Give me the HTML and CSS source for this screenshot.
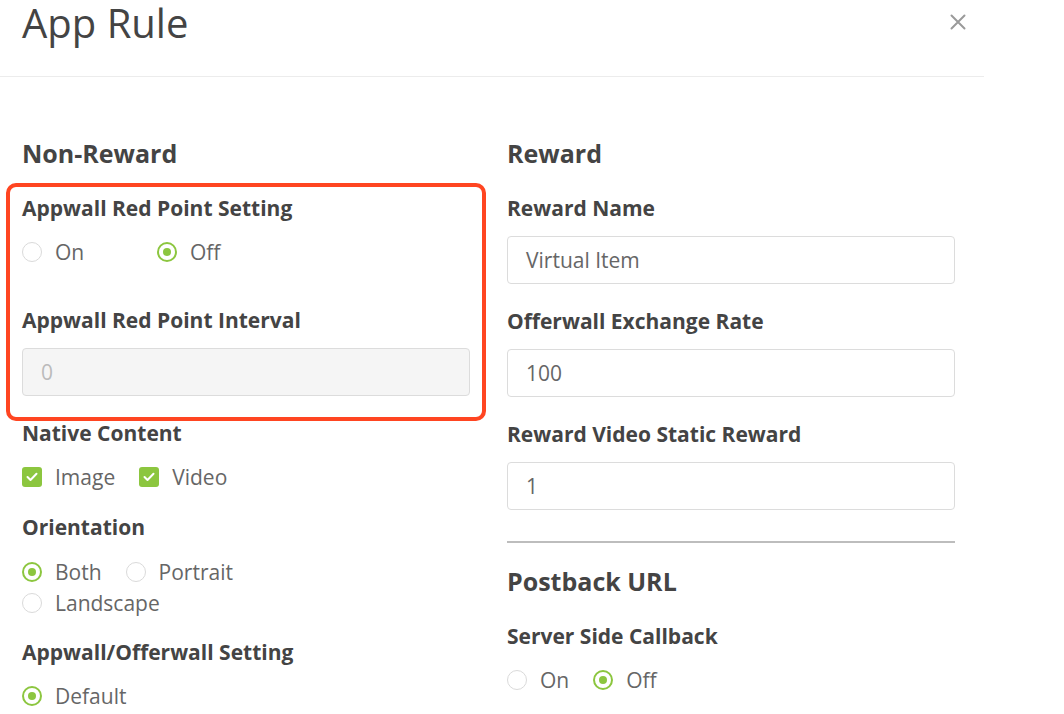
FILE: index.html
```html
<!DOCTYPE html>
<html lang="en">
<head>
<meta charset="utf-8">
<title>App Rule</title>
<link rel="stylesheet" href="styles.css">
</head>
<body>
<div class="modal">
  <header class="modal-header">
    <h1 class="modal-title">App Rule</h1>
    <button class="close" aria-label="Close">
      <svg width="16" height="16" viewBox="0 0 16 16"><path d="M1.5 1.5 L14.5 14.5 M14.5 1.5 L1.5 14.5" stroke="#9a9a9a" stroke-width="2" fill="none" stroke-linecap="round"/></svg>
    </button>
  </header>
  <div class="modal-body">
    <section class="col">
      <h2 class="section-title">Non-Reward</h2>
      <div class="highlight">
        <div class="group group-wide">
          <div class="label">Appwall Red Point Setting</div>
          <div class="options">
            <label class="opt opt-wide"><span class="radio"></span>On</label>
            <label class="opt"><span class="radio checked"></span>Off</label>
          </div>
        </div>
        <div class="group">
          <div class="label">Appwall Red Point Interval</div>
          <div class="input disabled">0</div>
        </div>
      </div>
      <div class="group group-check">
        <div class="label">Native Content</div>
        <div class="options">
          <label class="opt"><span class="check"><svg width="12" height="10" viewBox="0 0 12 10"><path d="M1.5 5 L4.5 8 L10.5 1.8" stroke="#fff" stroke-width="2" fill="none" stroke-linecap="round" stroke-linejoin="round"/></svg></span>Image</label>
          <label class="opt"><span class="check"><svg width="12" height="10" viewBox="0 0 12 10"><path d="M1.5 5 L4.5 8 L10.5 1.8" stroke="#fff" stroke-width="2" fill="none" stroke-linecap="round" stroke-linejoin="round"/></svg></span>Video</label>
        </div>
      </div>
      <div class="group group-orient">
        <div class="label">Orientation</div>
        <div class="options options-narrow">
          <label class="opt"><span class="radio checked"></span>Both</label>
          <label class="opt"><span class="radio"></span>Portrait</label>
          <label class="opt"><span class="radio"></span>Landscape</label>
        </div>
      </div>
      <div class="group">
        <div class="label">Appwall/Offerwall Setting</div>
        <div class="options">
          <label class="opt"><span class="radio checked"></span>Default</label>
        </div>
      </div>
    </section>
    <section class="col">
      <h2 class="section-title">Reward</h2>
      <div class="group">
        <div class="label">Reward Name</div>
        <div class="input">Virtual Item</div>
      </div>
      <div class="group">
        <div class="label">Offerwall Exchange Rate</div>
        <div class="input">100</div>
      </div>
      <div class="group">
        <div class="label">Reward Video Static Reward</div>
        <div class="input">1</div>
      </div>
      <hr class="divider">
      <h2 class="section-title">Postback URL</h2>
      <div class="group">
        <div class="label">Server Side Callback</div>
        <div class="options options-low">
          <label class="opt"><span class="radio"></span>On</label>
          <label class="opt"><span class="radio checked"></span>Off</label>
        </div>
      </div>
    </section>
  </div>
</div>
</body>
</html>
```
FILE: styles.css
```css
* { box-sizing: border-box; }
html, body { margin: 0; padding: 0; background: #fff; }
body {
  font-family: "Open Sans", "Noto Sans", sans-serif;
  color: #444;
  width: 1064px;
  height: 714px;
  overflow: hidden;
}
.modal { width: 984px; }
.modal-header {
  display: flex;
  justify-content: space-between;
  align-items: flex-start;
  height: 77px;
  padding: 0 18px 0 22px;
  border-bottom: 1px solid #ececec;
}
.modal-title {
  margin: -5px 0 0;
  font-size: 40px;
  line-height: 56px;
  font-weight: 400;
  color: #444;
}
.close {
  margin-top: 14px;
  padding: 0;
  border: 0;
  background: none;
  width: 16px;
  height: 16px;
  display: block;
}
.close svg { display: block; }
.modal-body {
  display: flex;
  gap: 37px;
  padding: 60px 0 0 22px;
}
.col { width: 448px; flex: none; }
.section-title {
  margin: 0 0 25px;
  font-size: 25px;
  line-height: 32px;
  font-weight: 700;
  color: #444;
}
.group { margin-bottom: 23px; }
.group-wide { margin-bottom: 39px; }
.group-check { margin-bottom: 21px; }
.group-orient { margin-bottom: 20px; }
.label {
  font-size: 21px;
  line-height: 28px;
  font-weight: 700;
  color: #444;
  margin-bottom: 14px;
}
.input {
  height: 48px;
  border: 1px solid #dcdcdc;
  border-radius: 4px;
  padding: 0 18px;
  font-size: 21px;
  line-height: 46px;
  color: #666;
  background: #fff;
}
.input.disabled { background: #f5f5f5; color: #bbb; }
.options { display: flex; flex-wrap: wrap; }
.options-narrow { width: 270px; padding-top: 1px; }
.options-low { padding-top: 0; }
.opt {
  display: flex;
  align-items: center;
  height: 31px;
  font-size: 21px;
  color: #666;
  margin-right: 24px;
}
.opt-wide { width: 135px; margin-right: 0; }
.radio {
  width: 20px;
  height: 20px;
  border-radius: 50%;
  border: 1.5px solid #dadada;
  margin-right: 13px;
  flex: none;
  display: flex;
  align-items: center;
  justify-content: center;
}
.radio.checked { border: 2px solid #8cc63f; }
.radio.checked::after {
  content: "";
  width: 8px;
  height: 8px;
  border-radius: 50%;
  background: #8cc63f;
}
.check {
  width: 20px;
  height: 20px;
  border-radius: 3px;
  background: #8cc63f;
  margin-right: 13px;
  flex: none;
  display: flex;
  align-items: center;
  justify-content: center;
}
.check svg { display: block; }
.highlight { position: relative; }
.highlight::before {
  content: "";
  position: absolute;
  top: -11px;
  left: -16px;
  right: -16px;
  bottom: -25px;
  border: 4px solid #ff4521;
  border-radius: 10px;
  pointer-events: none;
}
.divider {
  margin: 31px 0 22px;
  border: 0;
  border-top: 2px solid #bdbdbd;
  height: 0;
}
```
